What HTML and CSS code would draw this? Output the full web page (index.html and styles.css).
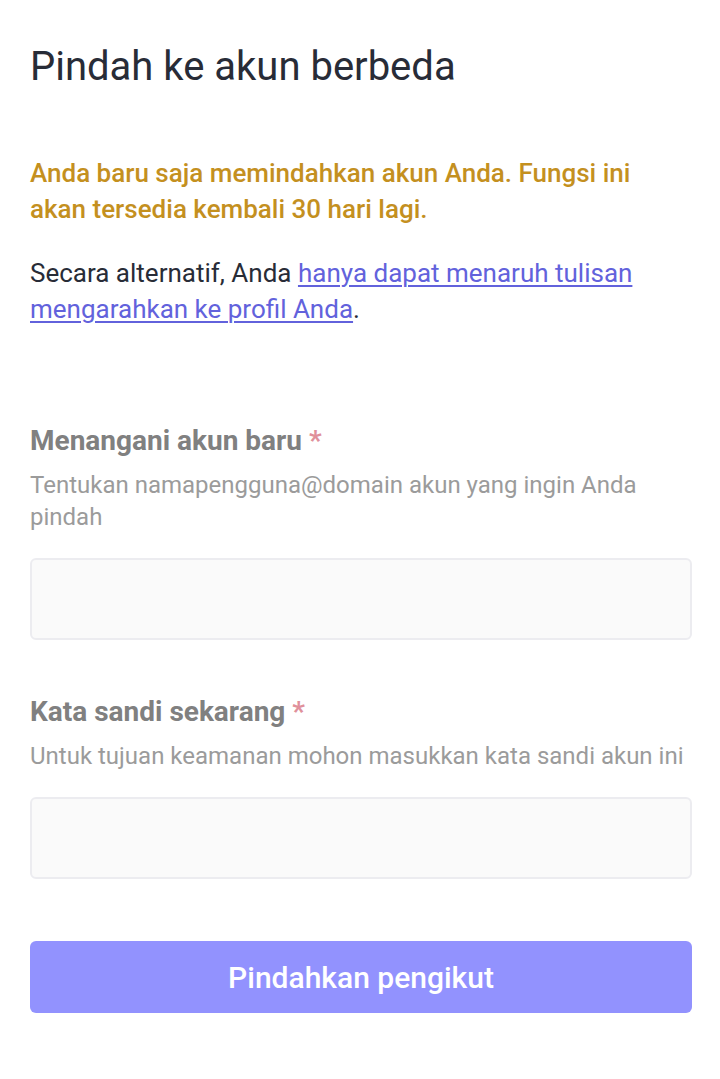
FILE: index.html
```html
<!DOCTYPE html>
<html lang="id">
<head>
<meta charset="utf-8">
<title>Pindah ke akun berbeda</title>
<link rel="stylesheet" href="styles.css">
</head>
<body>
<main class="page">
  <h1 class="title">Pindah ke akun berbeda</h1>
  <p class="warning">Anda baru saja memindahkan akun Anda. Fungsi ini akan tersedia kembali 30 hari lagi.</p>
  <p class="alt">Secara alternatif, Anda <a href="#" class="link">hanya dapat menaruh tulisan mengarahkan ke profil Anda</a>.</p>
  <form class="form">
    <div class="field">
      <label class="label">Menangani akun baru <span class="req">*</span></label>
      <p class="hint">Tentukan namapengguna@domain akun yang ingin Anda pindah</p>
      <input class="input" type="text" disabled>
    </div>
    <div class="field">
      <label class="label">Kata sandi sekarang <span class="req">*</span></label>
      <p class="hint">Untuk tujuan keamanan mohon masukkan kata sandi akun ini</p>
      <input class="input" type="password" disabled>
    </div>
    <button class="button" type="button" disabled>Pindahkan pengikut</button>
  </form>
</main>
</body>
</html>
```
FILE: styles.css
```css
html, body {
  margin: 0;
  padding: 0;
  background: #ffffff;
}
body {
  font-family: Roboto, "Liberation Sans", sans-serif;
  color: #282c37;
}
.page {
  padding: 0 28px 0 30px;
}
.title {
  margin: 0;
  padding-top: 41px;
  font-size: 40px;
  font-weight: 400;
  line-height: 52px;
  color: #282c37;
}
.warning {
  margin: 62px 0 0;
  font-size: 26px;
  line-height: 36px;
  font-weight: 500;
  color: #c4901f;
}
.alt {
  margin: 28px 0 0;
  font-size: 26px;
  line-height: 36px;
  color: #282c37;
}
.link {
  color: #6262dc;
  text-decoration: underline;
  text-underline-offset: 3px;
  text-decoration-thickness: 2px;
}
.form {
  margin-top: 96px;
}
.field {
  display: flex;
  flex-direction: column;
  margin-bottom: 54px;
}
.field + .field {
  margin-bottom: 62px;
}
.label {
  font-size: 28px;
  font-weight: 700;
  line-height: 36px;
  color: #808080;
}
.req {
  color: #e0909b;
}
.hint {
  margin: 10px 0 0;
  font-size: 24px;
  line-height: 32px;
  color: #9b9b9b;
}
.input {
  margin-top: 25px;
  height: 82px;
  box-sizing: border-box;
  background: #fafafa;
  border: 2px solid #ececf0;
  border-radius: 6px;
}
.button {
  display: block;
  width: 100%;
  height: 72px;
  margin: 0;
  border: 0;
  border-radius: 6px;
  background: #9292fe;
  color: #ffffff;
  font-family: Roboto, "Liberation Sans", sans-serif;
  font-size: 30px;
  font-weight: 500;
}
```
